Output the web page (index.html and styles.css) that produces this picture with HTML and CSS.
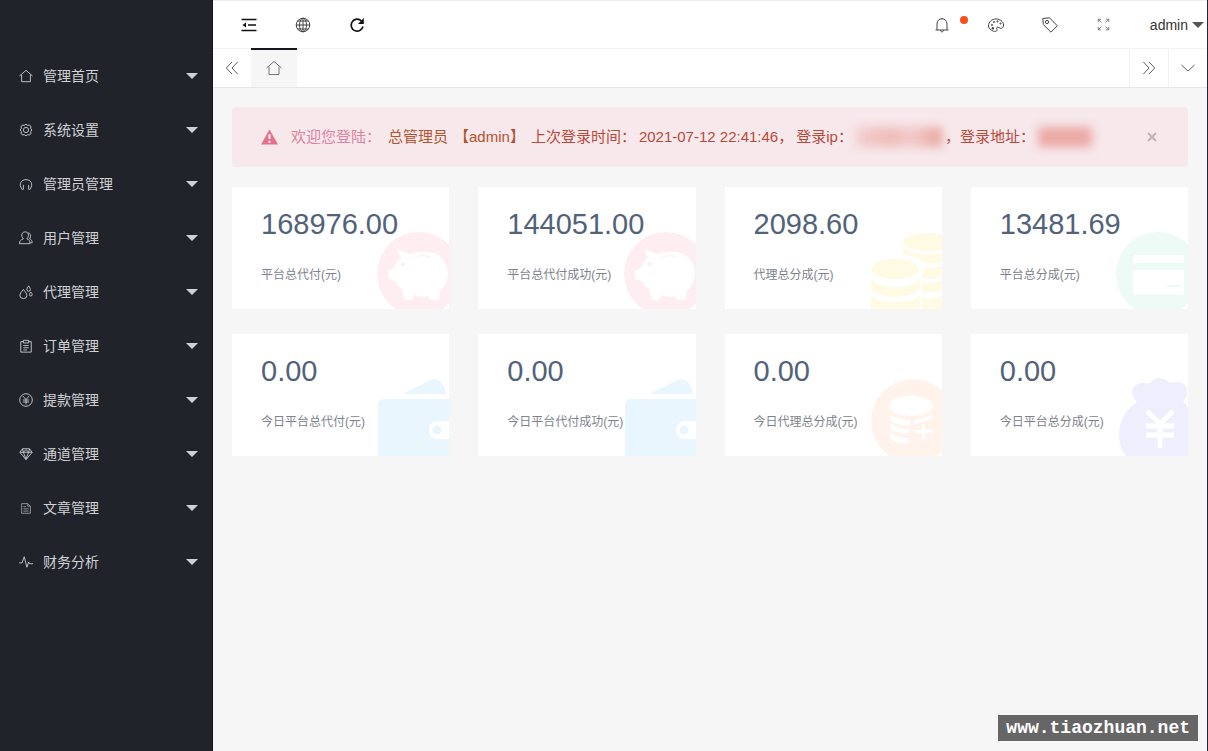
FILE: index.html
```html
<!DOCTYPE html>
<html lang="zh-CN">
<head>
<meta charset="utf-8">
<title>管理首页</title>
<link rel="stylesheet" href="styles.css">
</head>
<body>
<svg class="defs" aria-hidden="true">
  <symbol id="home" viewBox="0 0 16 16"><path d="M.5 8 8 1.500l7.500 6.500M3 6.500v8h10v-8"/></symbol>
  <symbol id="pig" viewBox="0 0 72 78">
    <circle cx="42" cy="43" r="42" fill="#ffeef1"/>
    <path fill="#fff" d="M20 18 33 23Q45 19 57 22Q70 27 71 42Q71 53 63 60L62 69H53L51 65Q43 67 37 64L35 69H28L25 58Q20 55 18 50L11 48V40L17 37Q19 30 24 27Z"/>
    <circle cx="26" cy="33" r="2" fill="#ffeef1"/>
    <path d="M38 26Q45 23 53 26" fill="none" stroke="#ffeef1" stroke-width="1"/>
  </symbol>
  <symbol id="wallet" viewBox="0 0 72 78">
    <path fill="#eaf6fe" d="M25 16 54 2Q60 0 64 4Q68 8 69 16ZM7 21H72V78H1V27Q1 21 7 21Z"/>
    <path fill="#fff" d="M72 43H60Q52 44 52 52T60 61H72Z"/>
    <circle cx="60" cy="52" r="4.500" fill="#eaf6fe"/>
  </symbol>
  <symbol id="coins" viewBox="0 0 72 78">
    <g fill="#fffae3">
      <ellipse cx="58" cy="11" rx="25" ry="9"/>
      <path d="M33 16Q42 26 72 22V31Q61 34 53 31Q48 25 33 24Z"/>
      <ellipse cx="25" cy="38" rx="24" ry="10"/>
      <path d="M54 36Q63 38 72 35V45Q65 49 52 47V43Q55 40 54 36ZM1 48Q10 57 28 56Q44 55 50 48V57Q46 65 25 66Q5 65 1 58ZM52 52Q63 53 72 49V59Q65 63 52 61ZM1 65Q10 72 27 71Q43 71 50 65V78H1ZM52 67Q63 69 72 65V78H52Z"/>
    </g>
  </symbol>
  <symbol id="card" viewBox="0 0 72 78">
    <circle cx="42" cy="43" r="42" fill="#edfaf6"/>
    <path fill="#fff" d="M20 24H66Q68 24 68 27V32H17V27Q17 24 20 24ZM17 39H68V62Q68 64 66 64H20Q17 64 17 61Z"/>
    <path stroke="#edfaf6" stroke-width="2" d="M51 55H64"/>
  </symbol>
  <symbol id="fund" viewBox="0 0 72 78">
    <circle cx="43" cy="43" r="42" fill="#fff3ec"/>
    <g fill="#fff">
      <ellipse cx="41" cy="28" rx="22" ry="10"/>
      <path d="M20 36Q26 42 40 42V47Q24 48 20 41ZM20 45Q26 51 39 51V55Q24 57 20 50ZM20 54Q26 60 39 60V65Q24 66 20 59Z"/>
      <path d="M44 42Q55 41 62 36V40Q55 44 44 46Z"/>
      <path d="M52 46H55V52H63V55H55V63H52V55H44V52H52Z"/>
    </g>
  </symbol>
  <symbol id="bag" viewBox="0 0 72 78">
    <path fill="#eeeefc" d="M21 24C13 17 15 5 27 5C33 6 35 5 37 2Q43-2 50 2C54 6 57 4 62 4C72 5 74 15 67 24Q72 27 72 32V78H10C-1 64 0 37 21 24Z"/>
    <path d="M31 33 44 46 57 33M44 46V70M30 48H58M30 57H58" fill="none" stroke="#fff" stroke-width="5"/>
  </symbol>
</svg>
<div class="app">
  <nav class="side">
    <button class="item"><svg class="ico"><use href="#home"/></svg><span>管理首页</span><i class="caret"></i></button>
    <button class="item"><svg class="ico" viewBox="0 0 16 16"><circle cx="8" cy="8" r="3"/><path d="M6 3a2.100 2.100 0 0 1 4 0 2.100 2.100 0 0 1 3 3 2.100 2.100 0 0 1 0 4 2.100 2.100 0 0 1-3 3 2.100 2.100 0 0 1-4 0 2.100 2.100 0 0 1-3-3 2.100 2.100 0 0 1 0-4 2.100 2.100 0 0 1 3-3z"/></svg><span>系统设置</span><i class="caret"></i></button>
    <button class="item"><svg class="ico" viewBox="0 0 16 16"><path d="M3 13.500C-.5 8 2.500 3 8 3s8.500 5 5 10.500M5 9v5H3M11 9v5h2"/></svg><span>管理员管理</span><i class="caret"></i></button>
    <button class="item"><svg class="ico" viewBox="0 0 16 16"><path d="M5 9C1.500 5 3.500 1 7 1s5.500 4 2 8c3 1 3.500 2.500 3.500 5.500h-12C.5 11.500 2 10 5 9M10.500 2c3 .5 3.500 4.500 1.500 7 2.500 1 3 2.500 3 4.500h-2"/></svg><span>用户管理</span><i class="caret"></i></button>
    <button class="item"><svg class="ico" viewBox="0 0 16 16"><path d="M5 5C3 8 1 9.500 1 12a4 3.500 0 0 0 8 0C9 9.500 7 8 5 5zM11 1C9.800 3 9 4 9 5.200a2 2 0 0 0 4 0C13 4 12.200 3 11 1zM13.500 8c-1 1.500-1.500 2-1.500 3a1.500 1.500 0 0 0 3 0c0-1-.5-1.500-1.500-3z"/></svg><span>代理管理</span><i class="caret"></i></button>
    <button class="item"><svg class="ico" viewBox="0 0 16 16"><path d="M5 3H2v12h12V3h-3M5 1.500h6v3H5zM5 7.500h6M5 10h6M5 12.500h4"/></svg><span>订单管理</span><i class="caret"></i></button>
    <button class="item"><svg class="ico" viewBox="0 0 16 16"><circle cx="8" cy="8" r="7.200"/><path d="m4.500 3.500 3.500 4 3.500-4M8 8v5M4.500 8h7M4.500 10.300h7"/></svg><span>提款管理</span><i class="caret"></i></button>
    <button class="item"><svg class="ico" viewBox="0 0 16 16"><path d="M4 2h8l3 4-7 8.500L1 6zM1 6h14M5 6l3 8 3-8M4 2l1 4 3-3 3 3 1-4"/></svg><span>通道管理</span><i class="caret"></i></button>
    <button class="item"><svg class="ico dim" viewBox="0 0 16 16"><path d="M3 3h7l3 3v8H3zM10 3v3h3M5 6.500h3M5 9h6M5 11.500h6"/></svg><span>文章管理</span><i class="caret"></i></button>
    <button class="item"><svg class="ico" viewBox="0 0 16 16"><path d="M0 9h3.500L6 2l3 12 2-6 1 2h4"/></svg><span>财务分析</span><i class="caret"></i></button>
  </nav>
  <main class="main">
    <header class="top">
      <button class="tool" aria-label="收起"><svg class="ico dark" viewBox="0 0 16 16"><path d="M.5 2.500h15M7 8h8M.5 13.500h15"/><path d="M5 5.500v5L1.500 8z" class="solid"/></svg></button>
      <button class="tool" aria-label="网站"><svg class="ico" viewBox="0 0 16 16"><circle cx="8" cy="8" r="6.800"/><path d="M8 1v14M1 8h14M2.500 4h11M2.500 12h11"/><ellipse cx="8" cy="8" rx="3.500" ry="6.800"/></svg></button>
      <button class="tool" aria-label="刷新"><svg class="ico dark" viewBox="0 0 16 16"><path d="M12.500 4A6 6 0 1 0 14 9.500"/><path class="solid" d="M14.800 1v6H9z"/></svg></button>
      <span class="grow"></span>
      <button class="tool" aria-label="消息"><svg class="ico" viewBox="0 0 16 16"><path d="M1.500 13h13M3 13V7c0-7 10-7 10 0v6M6.500 13c0 2.500 3 2.500 3 0M8 1v1"/></svg><i class="dot"></i></button>
      <button class="tool" aria-label="主题"><svg class="ico" viewBox="0 0 16 16"><path d="M.5 9C.5 4.500 4 2 8 2s7.500 2.500 7.500 6-2.500 4-4.500 2.500c-2-1-3 .5-2 2S7 15 5 14s-4.500-2-4.500-5z"/><circle cx="4" cy="8" r=".6"/><circle cx="6" cy="5" r=".6"/><circle cx="9.500" cy="4.500" r=".6"/><circle cx="12.500" cy="6.500" r=".6"/><circle cx="4.800" cy="11.300" r="1.200" class="solid"/></svg></button>
      <button class="tool" aria-label="便签"><svg class="ico" viewBox="0 0 16 16"><path d="M.8 1.500 7.500.8l7.800 8-6.300 6.400-7.700-7.700z"/><circle cx="5" cy="5" r="1.600"/></svg></button>
      <button class="tool" aria-label="全屏"><svg class="ico small" viewBox="0 0 16 16"><path d="M1.500 5V1.500H5M11 1.500h3.500V5M1.500 11v3.500H5M14.500 11v3.500H11M1.500 1.500l4 4M14.500 1.500l-4 4M1.500 14.500l4-4M14.500 14.500l-4-4"/></svg></button>
      <button class="user">admin<i class="caret"></i></button>
    </header>
    <div class="tabs">
      <button class="tab" aria-label="向左"><svg class="ico" viewBox="0 0 16 16"><path d="M8 1 1.500 8 8 15M14.500 1 8 8l6.500 7"/></svg></button>
      <button class="tab home" aria-label="首页"><svg class="ico"><use href="#home"/></svg></button>
      <span class="grow"></span>
      <button class="tab line" aria-label="向右"><svg class="ico" viewBox="0 0 16 16"><path d="m1.500 1 6.500 7-6.500 7M8 1l6.500 7L8 15"/></svg></button>
      <button class="tab line" aria-label="更多"><svg class="ico" viewBox="0 0 16 16"><path d="m.5 4.500 7.500 7 7.500-7"/></svg></button>
    </div>
    <section class="body">
      <div class="alert">
        <svg class="warn" viewBox="0 0 18 16"><path d="M9 0 18 16H0z" fill="#e4718b"/><path d="M9 5v5M9 12v2" stroke="#fff" stroke-width="2"/></svg>
        <span class="hello">欢迎您登陆：</span>
        <span class="who">总管理员</span><span class="who">【admin】</span>
        <span>上次登录时间：</span><span>2021-07-12 22:41:46，</span><span>登录ip：</span>
        <i class="smudge wide"></i><span class="comma">，</span><span>登录地址：</span><i class="smudge"></i>
        <button class="close" aria-label="关闭"><svg viewBox="0 0 10 10"><path d="m1 1 8 8M9 1 1 9"/></svg></button>
      </div>
      <div class="cards">
        <article class="card"><strong>168976.00</strong><p>平台总代付(元)</p><svg class="art"><use href="#pig"/></svg></article>
        <article class="card"><strong>144051.00</strong><p>平台总代付成功(元)</p><svg class="art"><use href="#pig"/></svg></article>
        <article class="card"><strong>2098.60</strong><p>代理总分成(元)</p><svg class="art"><use href="#coins"/></svg></article>
        <article class="card"><strong>13481.69</strong><p>平台总分成(元)</p><svg class="art"><use href="#card"/></svg></article>
        <article class="card"><strong>0.00</strong><p>今日平台总代付(元)</p><svg class="art"><use href="#wallet"/></svg></article>
        <article class="card"><strong>0.00</strong><p>今日平台代付成功(元)</p><svg class="art"><use href="#wallet"/></svg></article>
        <article class="card"><strong>0.00</strong><p>今日代理总分成(元)</p><svg class="art"><use href="#fund"/></svg></article>
        <article class="card"><strong>0.00</strong><p>今日平台总分成(元)</p><svg class="art"><use href="#bag"/></svg></article>
      </div>
    </section>
  </main>
</div>
<div class="mark">www.tiaozhuan.net</div>
</body>
</html>
```
FILE: styles.css
```css
* { box-sizing: border-box; }
body { margin: 0; background: #f6f6f6; font-family: "Liberation Sans", "Noto Sans CJK SC", sans-serif; font-size: 14px; color: #333; }
button { margin: 0; padding: 0; border: 0; background: none; font: inherit; color: inherit; cursor: pointer; }
.defs { position: absolute; width: 0; height: 0; }
.app { display: flex; min-height: 100vh; border-right: 1px solid #1b2740; }
.side { flex: none; width: 213px; padding-top: 48px; background: #20232a; border-right: 1px solid #14161b; color: #d0d1d4; }
.item { display: flex; align-items: center; width: 100%; height: 54px; padding: 1px 14px 0 19px; text-align: left; }
.item span { flex: 1; padding: 0 0 2px 10px; }
.ico { display: block; width: 14px; height: 14px; fill: none; stroke: currentColor; stroke-width: 1; overflow: visible; }
.ico .solid { fill: currentColor; stroke: none; }
.ico.dim { opacity: .7; }
.caret { border: 6px solid transparent; border-top-color: currentColor; border-bottom: 0; }
.main { flex: 1; min-width: 0; }
.grow { flex: 1; }
.top { display: flex; height: 48px; padding-left: 9px; background: #fff; border-top: 1px solid #eee; }
.tool { position: relative; display: flex; align-items: center; justify-content: center; width: 54px; color: #444; }
.tool .ico { width: 16px; height: 16px; }
.tool .ico.dark { color: #111; stroke-width: 1.6; }
.tool .ico.small { width: 13px; height: 13px; color: #666; }
.dot { position: absolute; top: 15px; right: 1px; width: 8px; height: 8px; border-radius: 50%; background: #f4511e; }
.user { display: flex; align-items: center; gap: 4px; padding: 0 3px 0 19px; }
.user .caret { color: #555; }
.tabs { display: flex; height: 40px; background: #fff; border-top: 1px solid #f2f2f2; border-bottom: 1px solid #e6e6e6; }
.tab { display: flex; align-items: center; justify-content: center; width: 38px; color: #444; }
.tab.home { width: 46px; margin-top: -1px; padding-bottom: 2px; background: #f6f6f6; border-top: 2px solid #16181d; color: #777; }
.tab.home .ico { width: 16px; height: 16px; }
.tab.line { width: 39px; border-left: 1px solid #f2f2f2; }
.body { padding: 19px; }
.alert { display: flex; align-items: center; gap: 3px; height: 60px; padding: 0 31px 0 29px; border-radius: 4px; background: #f7e8eb; font-size: 15px; line-height: 24px; color: #b94a3a; white-space: nowrap; }
.warn { width: 17px; height: 16px; margin-right: 10px; }
.hello { margin-right: 4px; color: #dc83a0; }
.who { margin-right: 3px; color: #b5532f; }
.smudge { width: 54px; height: 20px; background: #eba9a5; filter: blur(5px); }
.smudge.wide { width: 86px; background: linear-gradient(90deg, #f4cfcf, #eebcb9 40%, #f2cbca 65%, #e8a49d); }
.comma { width: 12px; }
.close { margin-left: auto; }
.close svg { display: block; width: 10px; height: 10px; fill: none; stroke: #c0b2b6; stroke-width: 2; }
.cards { display: grid; grid-template-columns: repeat(4, 1fr); gap: 25px 29px; margin-top: 20px; }
.card { position: relative; height: 122px; padding: 19px 29px; background: #fff; overflow: hidden; }
.card strong { display: block; font-size: 29px; line-height: 36px; font-weight: 400; color: #52627a; }
.card p { margin: 24px 0 0; font-size: 12px; line-height: 18px; color: #7d828c; white-space: nowrap; position: relative; z-index: 1; }
.art { position: absolute; right: 0; bottom: 0; width: 72px; height: 78px; }
.mark { position: fixed; right: 10px; bottom: 10px; padding: 0 8px; background: #666; color: #fff; font: bold 18px/26px "Liberation Mono", monospace; }
```
